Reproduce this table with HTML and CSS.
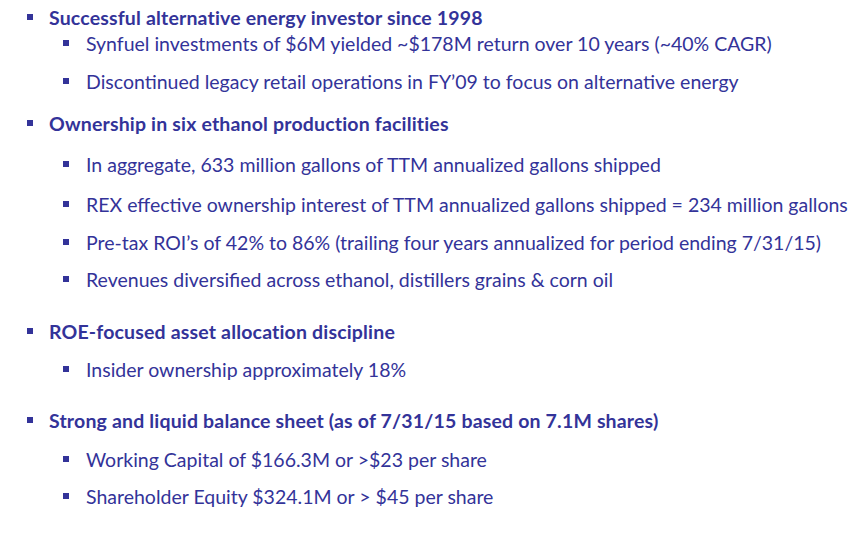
FILE: index.html
```html
<!DOCTYPE html>
<html lang="en">
<head>
<meta charset="utf-8">
<title>REX overview</title>
<link rel="stylesheet" href="styles.css">
</head>
<body>
<ul class="outline">
  <li class="lvl1">Successful alternative energy investor since 1998</li>
  <li class="lvl2 sp-2">Synfuel investments of $6M yielded ~$178M return over 10 years (~40% CAGR)</li>
  <li class="lvl2 sp-14">Discontinued legacy retail operations in FY’09 to focus on alternative energy</li>
  <li class="lvl1 sp-18">Ownership in six ethanol production facilities</li>
  <li class="lvl2 sp-17">In aggregate, 633 million gallons of TTM annualized gallons shipped</li>
  <li class="lvl2 sp-16">REX effective ownership interest of TTM annualized gallons shipped = 234 million gallons</li>
  <li class="lvl2 sp-14">Pre-tax ROI’s of 42% to 86% (trailing four years annualized for period ending 7/31/15)</li>
  <li class="lvl2 sp-13">Revenues diversified across ethanol, distillers grains &amp; corn oil</li>
  <li class="lvl1 sp-28">ROE-focused asset allocation discipline</li>
  <li class="lvl2 sp-14">Insider ownership approximately 18%</li>
  <li class="lvl1 sp-27">Strong and liquid balance sheet (as of 7/31/15 based on 7.1M shares)</li>
  <li class="lvl2 sp-15">Working Capital of $166.3M or &gt;$23 per share</li>
  <li class="lvl2 sp-13">Shareholder Equity $324.1M or &gt; $45 per share</li>
</ul>
</body>
</html>
```

FILE: styles.css
```css
html, body {
  margin: 0;
  padding: 0;
  background: #ffffff;
}
body {
  width: 859px;
  height: 544px;
  overflow: hidden;
  font-family: Lato, "Open Sans", "Liberation Sans", sans-serif;
  font-size: 19.5px;
  line-height: 24px;
  color: #333399;
}
.outline {
  list-style: none;
  margin: 0;
  padding: 6px 0 0 0;
  display: flex;
  flex-direction: column;
}
.outline li {
  white-space: nowrap;
}
.lvl1 {
  font-weight: 700;
  letter-spacing: 0.17px;
  padding-left: 27px;
}
.lvl1::before {
  content: "";
  display: inline-block;
  width: 6px;
  height: 6px;
  background: #333399;
  margin: 0 16px 5px 0;
}
.lvl2 {
  padding-left: 63px;
}
.lvl2::before {
  content: "";
  display: inline-block;
  width: 6px;
  height: 6px;
  background: #333399;
  margin: 0 17px 5px 0;
}
.sp-2 { margin-top: 2px; }
.sp-13 { margin-top: 13px; }
.sp-14 { margin-top: 14px; }
.sp-15 { margin-top: 15px; }
.sp-16 { margin-top: 16px; }
.sp-17 { margin-top: 17px; }
.sp-18 { margin-top: 18px; }
.sp-27 { margin-top: 27px; }
.sp-28 { margin-top: 28px; }
```
